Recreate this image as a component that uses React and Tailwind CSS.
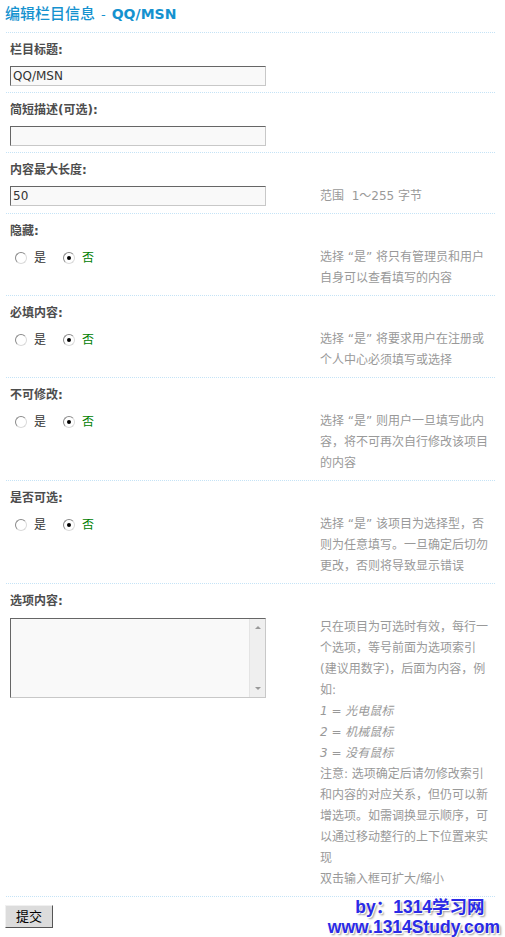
import React from "react";

const Radio = ({ checked }) => (
    <span className="w-[12px] h-[12px] rounded-full border border-t-[#8a8a8a] border-l-[#8a8a8a] border-r-[#dadada] border-b-[#dadada] bg-white flex items-center justify-center shrink-0">
        {checked && <span className="w-[4px] h-[4px] rounded-full bg-black" />}
    </span>
);

const YesNo = () => (
    <div className="flex items-center h-[21px] pl-[5px] text-[12px]">
        <Radio />
        <span className="ml-[7px] text-[#333]">是</span>
        <span className="ml-[17px]">
            <Radio checked />
        </span>
        <span className="ml-[7px] text-[#008000]">否</span>
    </div>
);

const TextInput = ({ value }) => (
    <input
        defaultValue={value}
        className="block w-[256px] h-[20px] px-[2px] text-[12px] text-[#333] bg-[#f9f9f9] border border-t-[#666] border-l-[#666] border-r-[#c8c8c8] border-b-[#c8c8c8] outline-none"
    />
);

const Section = ({ label, left, hint }) => (
    <div className="border-t border-dotted border-[#c5e3f6] px-[4px] pt-[8px] pb-[6px]">
        <div className="font-bold text-[#4d4d4d] leading-[18px] text-[12px]">{label}</div>
        <div className="flex items-start mt-[7px]">
            <div className="w-[310px] shrink-0">{left}</div>
            {hint && (
                <div className="text-[#999] leading-[21px] text-[12px] whitespace-nowrap">
                    {hint}
                </div>
            )}
        </div>
    </div>
);

const Lines = ({ lines }) => (
    <>
        {lines.map((l, i) => (
            <div key={i}>{l}</div>
        ))}
    </>
);

export default function App() {
    return (
        <div
            className="w-[505px] h-[937px] overflow-hidden bg-white pl-[6px] pr-[10px]"
            style={{ fontFamily: '"DejaVu Sans", "Noto Sans CJK SC", sans-serif' }}
        >
            {/* title */}
            <div className="h-[32px] pt-[4px] -ml-[1px] text-[15px] leading-[20px] text-[#1592cf] whitespace-nowrap">
                <span className="font-medium">编辑栏目信息</span>
                <span className="ml-[6px] text-[13px]">-</span>
                <span className="ml-[6px] font-bold text-[14px]">QQ/MSN</span>
            </div>

            <Section label="栏目标题:" left={<TextInput value="QQ/MSN" />} />
            <Section label="简短描述(可选):" left={<TextInput value="" />} />
            <Section
                label="内容最大长度:"
                left={<TextInput value="50" />}
                hint={<span>范围&nbsp; 1～255 字节</span>}
            />
            <Section
                label="隐藏:"
                left={<YesNo />}
                hint={<Lines lines={["选择 “是” 将只有管理员和用户", "自身可以查看填写的内容"]} />}
            />
            <Section
                label="必填内容:"
                left={<YesNo />}
                hint={<Lines lines={["选择 “是” 将要求用户在注册或", "个人中心必须填写或选择"]} />}
            />
            <Section
                label="不可修改:"
                left={<YesNo />}
                hint={
                    <Lines
                        lines={["选择 “是” 则用户一旦填写此内", "容，将不可再次自行修改该项目", "的内容"]}
                    />
                }
            />
            <Section
                label="是否可选:"
                left={<YesNo />}
                hint={
                    <Lines
                        lines={["选择 “是” 该项目为选择型，否", "则为任意填写。一旦确定后切勿", "更改，否则将导致显示错误"]}
                    />
                }
            />
            <Section
                label="选项内容:"
                left={
                    <div className="mt-[1px] flex w-[256px] h-[80px] bg-[#f9f9f9] border border-t-[#666] border-l-[#666] border-r-[#c8c8c8] border-b-[#c8c8c8]">
                        <textarea className="flex-1 resize-none bg-transparent outline-none text-[12px] p-[2px]" />
                        <div className="w-[16px] bg-[#efefef] border-l border-[#e4e4e4] flex flex-col items-center justify-between py-[7px]">
                            <span className="w-0 h-0 border-l-[3px] border-r-[3px] border-b-[3px] border-l-transparent border-r-transparent border-b-[#999]" />
                            <span className="w-0 h-0 border-l-[3px] border-r-[3px] border-t-[3px] border-l-transparent border-r-transparent border-t-[#999]" />
                        </div>
                    </div>
                }
                hint={
                    <>
                        <div>只在项目为可选时有效，每行一</div>
                        <div>个选项，等号前面为选项索引</div>
                        <div>(建议用数字)，后面为内容，例</div>
                        <div>如:</div>
                        <div className="italic">1 = 光电鼠标</div>
                        <div className="italic">2 = 机械鼠标</div>
                        <div className="italic">3 = 没有鼠标</div>
                        <div>注意: 选项确定后请勿修改索引</div>
                        <div>和内容的对应关系，但仍可以新</div>
                        <div>增选项。如需调换显示顺序，可</div>
                        <div>以通过移动整行的上下位置来实</div>
                        <div>现</div>
                        <div>双击输入框可扩大/缩小</div>
                    </>
                }
            />

            {/* footer */}
            <div className="border-t border-dotted border-[#c5e3f6] pt-[8px] flex justify-between items-start">
                <button className="-ml-[1px] w-[48px] h-[23px] bg-[#dcdcdc] border border-t-[#f0f0f0] border-l-[#f0f0f0] border-r-[#555] border-b-[#555] text-[13px] text-black leading-none">
                    提交
                </button>
                <div
                    className="-mr-[5px] -mt-[8px] flex flex-col items-center font-bold text-[17.5px] text-[#2a2ae6] [text-shadow:1px_1px_0_#fff,2px_2px_2px_#9a9a9a]"
                    style={{ fontFamily: '"Liberation Sans", "Noto Sans CJK SC", sans-serif' }}
                >
                    <span className="ml-[12px] h-[20px] leading-[20px]">by：1314学习网</span>
                    <span className="h-[20px] leading-[20px]">www.1314Study.com</span>
                </div>
            </div>
        </div>
    );
}
